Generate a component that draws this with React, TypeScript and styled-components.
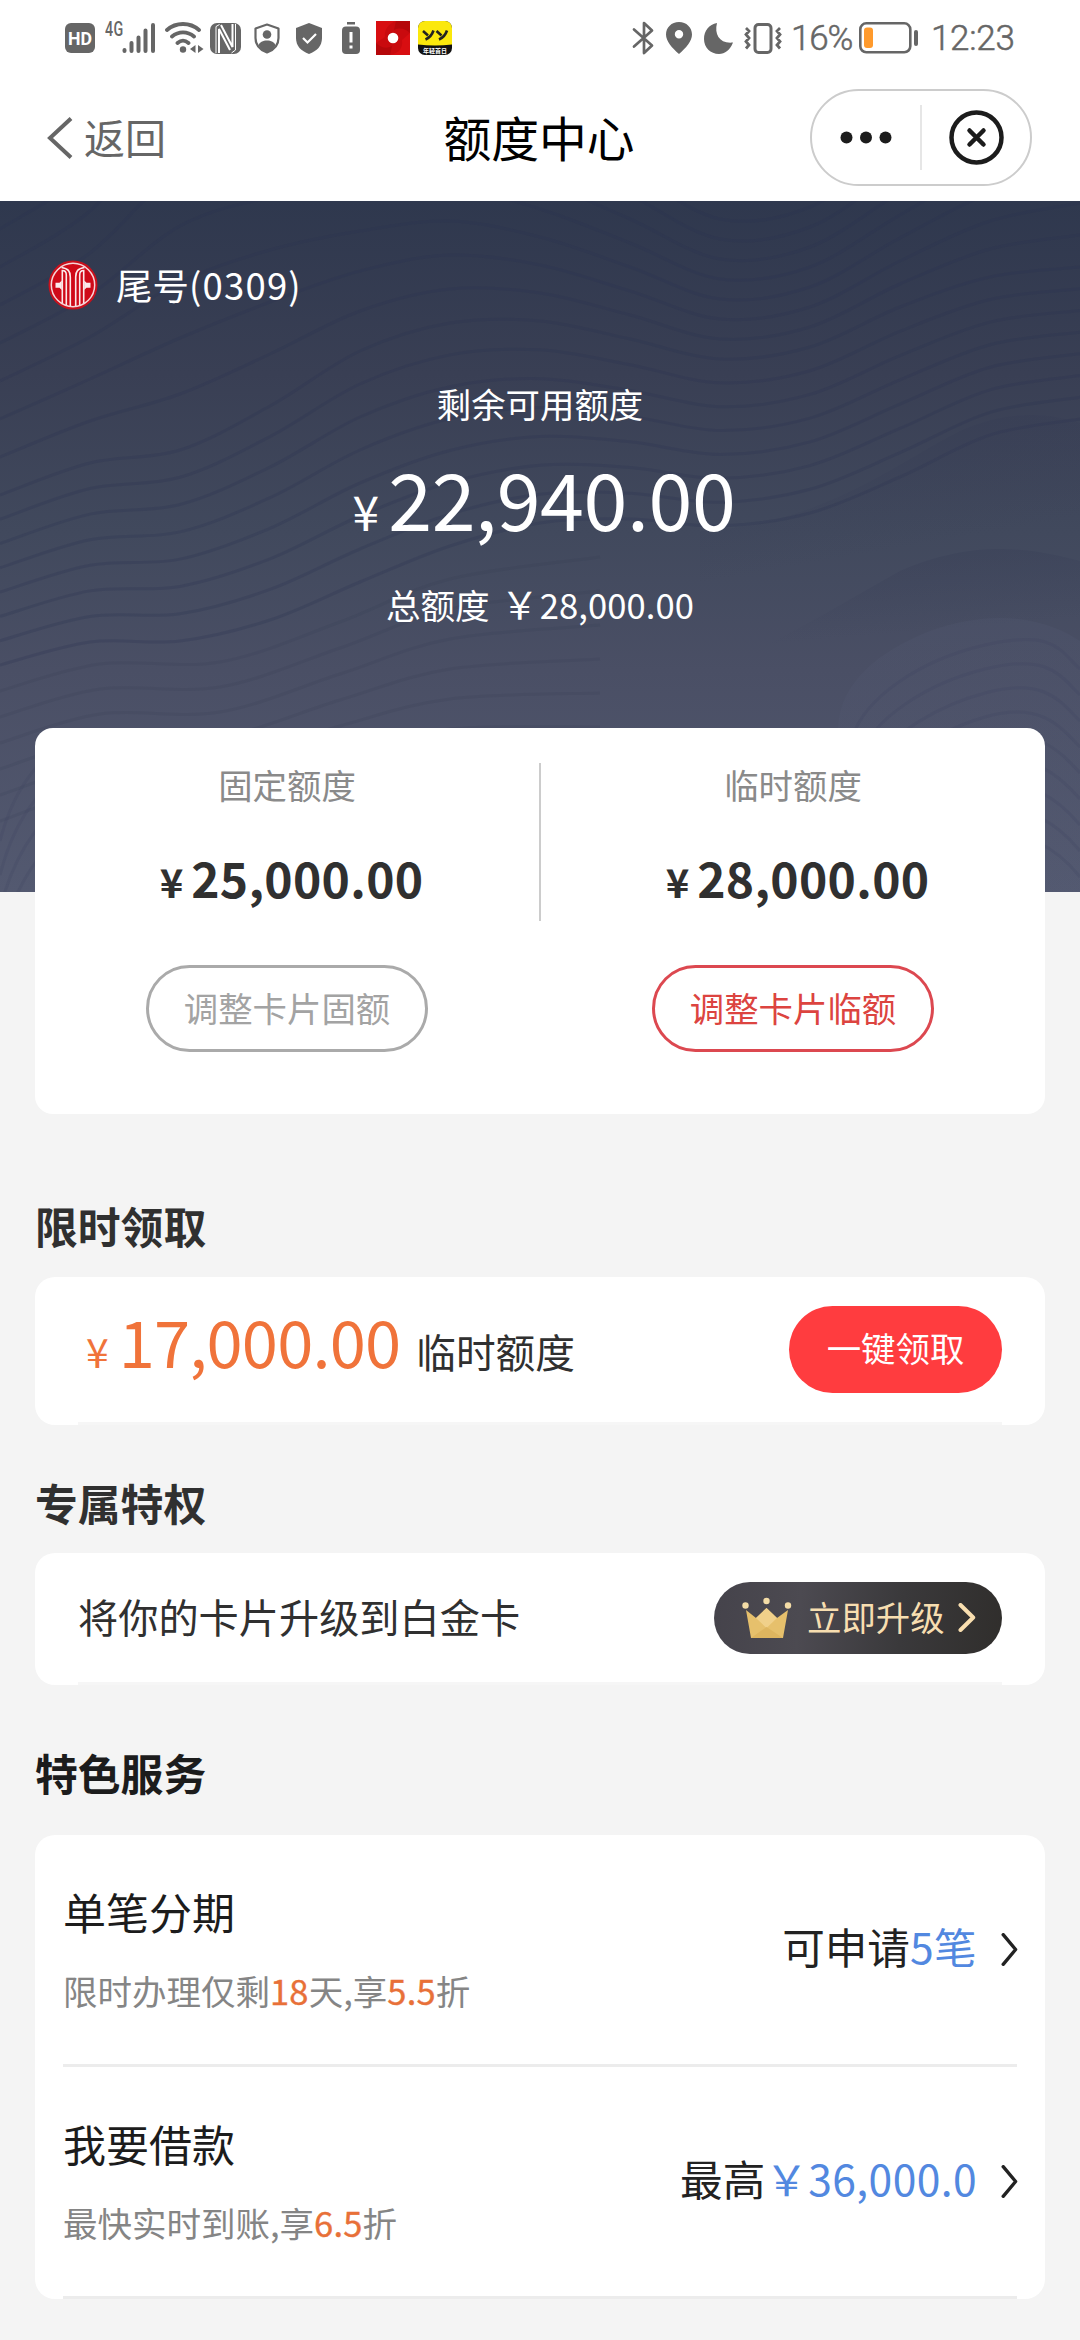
import React from "react";
import styled, { createGlobalStyle } from "styled-components";

const GlobalStyle = createGlobalStyle`
  * { box-sizing: border-box; }
  body {
    margin: 0;
    background: #f4f4f4;
    font-family: "Noto Sans CJK SC", "Noto Sans", sans-serif;
    color: #303030;
  }
  svg { display: block; flex: none; }
`;

const Page = styled.div`
  width: 1080px;
  height: 2340px;
  overflow: hidden;
  background: #f4f4f4;
  display: flex;
  flex-direction: column;
`;

/* ---------- status bar ---------- */

const StatusBar = styled.div`
  height: 76px;
  flex: none;
  padding: 0 67px 0 65px;
  background: #fff;
  display: flex;
  justify-content: space-between;
  color: #666;
`;

const StatusGroup = styled.div`
  display: flex;
  height: 76px;
  align-items: center;
`;

const Slot = styled.div<{ $gap?: number }>`
  margin-left: ${(p) => p.$gap ?? 0}px;
`;

const NetLabel = styled.div`
  font: 500 21px/20px Roboto, sans-serif;
  letter-spacing: 0.4px;
  width: 17px;
  margin: -18px 0 0 10px;
  transform: scaleX(0.68);
  transform-origin: left;
`;

const StatusText = styled.div<{ $gap: number; $track: number; $width: number }>`
  font: 300 35px/40px Roboto, sans-serif;
  -webkit-text-stroke: 0.5px #666;
  letter-spacing: ${(p) => p.$track}px;
  margin-left: ${(p) => p.$gap}px;
  width: ${(p) => p.$width}px;
  white-space: nowrap;
  padding-top: 1px;
`;

/* ---------- nav bar ---------- */

const NavBar = styled.header`
  height: 125px;
  flex: none;
  background: #fff;
  display: grid;
  grid-template-columns: 1fr auto 1fr;
  align-items: center;
  padding: 0 48px 0 46px;
`;

const Back = styled.div`
  display: flex;
  align-items: center;
  gap: 11px;
  margin-top: -1px;
  color: #666;
  font-size: 41px;
  line-height: 50px;
  span { margin-top: -4px; }
`;

const Title = styled.h1`
  margin: -4px 0 0;
  font-size: 47.8px;
  font-weight: 400;
  line-height: 60px;
  color: #000;
`;

const Capsule = styled.div`
  justify-self: end;
  width: 222px;
  height: 97px;
  margin-top: -3px;
  border: 2px solid #ccc;
  border-radius: 49px;
  display: flex;
  align-items: center;
`;

const CapsuleHalf = styled.div`
  flex: 1;
  display: flex;
  justify-content: center;
`;

const CapsuleRule = styled.div`
  width: 2px;
  height: 65px;
  background: #e6e6e6;
`;

/* ---------- hero ---------- */

const Hero = styled.section`
  position: relative;
  flex: none;
  height: 691px;
  background: linear-gradient(#2f384e 0%, #393f54 25%, #41495d 48%, #4a4f65 68%, #535970 100%);
  color: #fff;
`;

const Waves = styled.svg`
  position: absolute;
  inset: 0;
`;

const HeroContent = styled.div`
  position: relative;
  display: flex;
  flex-direction: column;
  align-items: center;
`;

const CardTail = styled.div`
  align-self: flex-start;
  display: flex;
  align-items: center;
  gap: 18px;
  margin: 57px 0 0 48px;
  height: 54px;
  font-size: 36.5px;
  line-height: 54px;
  b { font-weight: 400; letter-spacing: 1.2px; }
  span { margin-top: -1px; }
`;

const HeroLabel = styled.div`
  margin-top: 66px;
  font-size: 34.4px;
  line-height: 50px;
`;

const Balance = styled.div`
  display: flex;
  align-items: baseline;
  margin: 24px 0 0 8px;
  height: 90px;
  line-height: 90px;
`;

const Yen = styled.span<{ $size: number; $gap: number; $lead?: number; $weight?: number }>`
  font-size: ${(p) => p.$size}px;
  font-weight: ${(p) => p.$weight ?? 400};
  margin: 0 ${(p) => p.$gap}px 0 ${(p) => p.$lead ?? 0}px;
`;

const Digits = styled.span<{ $size: number; $track?: number; $weight?: number }>`
  font-size: ${(p) => p.$size}px;
  font-weight: ${(p) => p.$weight ?? 400};
  letter-spacing: ${(p) => p.$track ?? 0}px;
`;

const TotalLine = styled.div`
  display: flex;
  align-items: baseline;
  margin-top: 36px;
  font-size: 34.6px;
  line-height: 50px;
  height: 50px;
`;

/* ---------- cards ---------- */

const LimitCard = styled.section`
  position: relative;
  flex: none;
  margin: -164px 35px 0;
  height: 386px;
  border-radius: 18px;
  background: #fff;
  display: flex;
  align-items: flex-start;
`;

const LimitColumn = styled.div`
  flex: 1;
  display: flex;
  flex-direction: column;
  align-items: center;
`;

const LimitRule = styled.div`
  width: 2px;
  height: 158px;
  margin-top: 35px;
  background: #ccc;
`;

const LimitLabel = styled.div`
  margin-top: 31px;
  font-size: 34.4px;
  line-height: 50px;
  color: #8a8a8a;
`;

const LimitAmount = styled.div`
  display: flex;
  align-items: baseline;
  margin: 38px 0 0 9px;
  height: 60px;
  line-height: 60px;
  color: #303030;
`;

const OutlineButton = styled.button<{ $color: string; $border: string }>`
  margin-top: 58px;
  width: 282px;
  height: 87px;
  padding: 0 0 4px;
  border: 3px solid ${(p) => p.$border};
  border-radius: 44px;
  background: #fff;
  color: ${(p) => p.$color};
  font: 400 34.4px/50px "Noto Sans CJK SC", sans-serif;
`;

const SectionTitle = styled.h2<{ $top: number; $color?: string }>`
  margin: ${(p) => p.$top}px 0 0 35px;
  flex: none;
  height: 60px;
  font-size: 42.8px;
  font-weight: 700;
  line-height: 60px;
  color: ${(p) => p.$color ?? "#303030"};
`;

const Card = styled.section<{ $top: number; $height: number }>`
  flex: none;
  margin: ${(p) => p.$top}px 35px 0;
  height: ${(p) => p.$height}px;
  border-radius: 20px;
  background: #fff;
  display: flex;
  flex-direction: column;
`;

const OfferRow = styled.div<{ $left: number }>`
  flex: 1;
  margin: 0 43px;
  padding-left: ${(p) => p.$left}px;
  border-bottom: 3px solid #f6f6f6;
  display: flex;
  justify-content: space-between;
  align-items: center;
`;

const Offer = styled.div`
  display: flex;
  align-items: baseline;
  color: #f0733a;
  margin-top: -8px;
  line-height: 80px;
  em {
    font-style: normal;
    font-size: 39.7px;
    color: #303030;
    margin-left: 16px;
  }
`;

const ClaimButton = styled.button`
  width: 213px;
  height: 87px;
  border: 0;
  border-radius: 44px;
  padding: 0 0 5px;
  background: #ff3c3f;
  color: #fff;
  font: 400 34.4px/50px "Noto Sans CJK SC", sans-serif;
`;

const PerkText = styled.div`
  font-size: 40.2px;
  line-height: 60px;
  padding-bottom: 4px;
`;

const UpgradeButton = styled.button`
  width: 288px;
  height: 72px;
  border: 0;
  border-radius: 36px;
  padding: 0 26px 0 28px;
  background: linear-gradient(95deg, #45434b 0%, #4c4a51 30%, #3a393b 65%, #302e2c 100%);
  color: #f7deb0;
  font: 400 34.4px/50px "Noto Sans CJK SC", sans-serif;
  display: flex;
  align-items: center;
  span { margin: -3px auto 0 15px; }
`;

const ServiceRow = styled.div`
  height: 232px;
  margin: 0 28px;
  border-bottom: 3px solid #ececec;
  display: flex;
  justify-content: space-between;
`;

const ServiceText = styled.div`
  display: flex;
  flex-direction: column;
  padding-top: 46px;
`;

const ServiceName = styled.div`
  font-size: 43px;
  line-height: 60px;
  color: #1c1c1c;
`;

const ServiceNote = styled.div`
  margin-top: 24px;
  font-size: 34.5px;
  line-height: 50px;
  color: #858585;
  i {
    font-style: normal;
    color: #e87038;
    -webkit-text-stroke: 0.4px #e87038;
    letter-spacing: 0.2px;
  }
`;

const ServiceValue = styled.div`
  display: flex;
  align-items: center;
  gap: 24px;
  height: 60px;
  margin: 84px -1px 0 0;
  span { font-size: 42.6px; line-height: 60px; color: #222; margin-top: -6px; }
  b { font-weight: 400; color: #5288e0; letter-spacing: 0.4px; }
`;

/* ---------- drawings ---------- */

type Pt = [number, number];

const smooth = (pts: Pt[]) => {
  let d = `M${pts[0][0]} ${pts[0][1]}`;
  for (let i = 0; i < pts.length - 1; i++) {
    const a = pts[Math.max(0, i - 1)];
    const b = pts[i];
    const c = pts[i + 1];
    const e = pts[Math.min(pts.length - 1, i + 2)];
    d += ` C${b[0] + (c[0] - a[0]) / 6} ${b[1] + (c[1] - a[1]) / 6} ${c[0] - (e[0] - b[0]) / 6} ${c[1] - (e[1] - b[1]) / 6} ${c[0]} ${c[1]}`;
  }
  return d;
};

/* Contours run from `crest` down to `base`; above the crest they spread out and steepen. */
const crest = [294, 262, 249, 205, 150, 122, 120, 138, 158, 146, 106, 76, 66];
const base = [464, 441, 440, 419, 381, 345, 322, 318, 325, 312, 276, 234, 218];
const rise = [38, 42, 56, 52, 40, 34, 28, 24, 20, 20, 23, 28, 32];

const contours: string[] = [];
for (let i = 1; i <= 7; i++) {
  contours.push(smooth(crest.map((y, k): Pt => [k * 90, y - rise[k] * i])));
}
for (let i = 0; i <= 7; i++) {
  contours.push(smooth(crest.map((y, k): Pt => [k * 90, y + ((base[k] - y) * i) / 7])));
}

const HeroWaves = () => (
  <Waves width="1080" height="691" viewBox="0 0 1080 691">
    <defs>
      <linearGradient id="fold" x1="0" y1="0" x2="0.25" y2="1">
        <stop offset="0" stopColor="#353b54" stopOpacity="0.42" />
        <stop offset="0.6" stopColor="#353b54" stopOpacity="0" />
      </linearGradient>
      <linearGradient id="mound" x1="0" y1="0" x2="0" y2="1">
        <stop offset="0" stopColor="#5a617c" stopOpacity="0.16" />
        <stop offset="1" stopColor="#5a617c" stopOpacity="0.05" />
      </linearGradient>
    </defs>
    <g fill="none" stroke="#2c3350" strokeOpacity="0.26" strokeWidth="3">
      {contours.map((d, i) => (
        <path key={i} d={d} />
      ))}
      {[1, 2, 3, 4, 5, 6].map((n) => (
        <path
          key={n}
          strokeOpacity={0.13}
          d={smooth([
            [0, 464 + n * 26],
            [100, 438 + n * 25],
            [220, 436 + n * 25],
            [340, 395 + n * 26],
            [450, 348 + n * 30],
            [600, 322 + n * 34],
          ])}
        />
      ))}
    </g>
    <path
      fill="url(#fold)"
      d="M700 330C820 325 900 260 960 230C1010 208 1050 212 1080 222V360C1020 340 960 360 900 400C820 450 760 470 700 480Z"
    />
    <path
      fill="url(#fold)"
      d="M560 525C700 490 820 415 900 370C980 335 1040 350 1080 360V460C980 400 880 440 840 527Z"
    />
    <path fill="url(#mound)" d="M838 527C840 480 880 450 930 430C1000 405 1050 420 1080 440V691H838Z" />
    <g fill="none" stroke="#3b4160" strokeOpacity="0.2" strokeWidth="3">
      {[1, 2, 3, 4, 5, 6, 7, 8, 9].map((n) => (
        <path
          key={n}
          d={`M${840 + n * 13} ${527 + n * 8}C${850 + n * 14} ${480 + n * 20} ${910 + n * 5} ${436 + n * 24} ${985} ${420 + n * 24}S${1060} ${425 + n * 25} 1080 ${442 + n * 26}`}
        />
      ))}
      {[0, 1, 2, 3, 4].map((n) => (
        <path key={n} d={`M0 ${640 + n * 34}C10 ${600 + n * 34} 30 ${560 + n * 30} 80 ${530 + n * 30}`} />
      ))}
    </g>
  </Waves>
);

const BankLogo = () => (
  <svg width="50" height="50" viewBox="0 0 50 50">
    <circle cx="25" cy="25" r="24.5" fill="#c8101c" />
    <circle cx="25" cy="25" r="21.7" fill="#cf0a18" stroke="#f6d5d8" strokeWidth="1.5" />
    <g fill="none" stroke="#fbe9ea" strokeWidth="1.6">
      <path d="M13.500 7.500C20 8.500 22.300 11 22.300 17V46M36.500 7.500C30 8.500 27.700 11 27.700 17V46" />
      <path d="M14.300 43V10.500C17 10.500 18.300 12 18.300 15V45M35.700 43V10.500C33 10.500 31.700 12 31.700 15V45" />
    </g>
    <path d="M13.800 20.500V30L11.500 27.800H7.500V22.800H11.500ZM36.200 20.500V30L38.500 27.800H42.500V22.800H38.500Z" fill="#fbe9ea" />
  </svg>
);

const Crown = () => (
  <svg width="50" height="42" viewBox="0 0 50 42">
    <path d="M4 13L14 21L24.500 11L35 21L46 13L41 41H9Z" fill="#e6c06c" />
    <path d="M24.500 11L35 21L24.500 31L14 21Z" fill="#f0d08a" />
    <path d="M9 41L24.500 30L41 41Z" fill="#deb55f" />
    <circle cx="3.500" cy="8.500" r="3.200" fill="#f3dca6" />
    <circle cx="24.500" cy="4" r="3.200" fill="#f3dca6" />
    <circle cx="46" cy="8.500" r="3.200" fill="#f3dca6" />
  </svg>
);

const Chevron = ({ color, w, h, stroke }: { color: string; w: number; h: number; stroke: number }) => (
  <svg width={w} height={h} viewBox={`0 0 ${w} ${h}`} fill="none" stroke={color} strokeWidth={stroke}>
    <path d={`M${stroke / 2 + 0.5} ${stroke / 2}L${w - stroke * 0.7} ${h / 2}L${stroke / 2 + 0.5} ${h - stroke / 2}`} strokeLinecap="round" strokeLinejoin="round" />
  </svg>
);

const G = "#666";

const StatusLeft = () => (
  <StatusGroup>
    <Slot>
      <svg width="30" height="30" viewBox="0 0 30 30">
        <rect width="30" height="30" rx="6" fill={G} />
        <text x="15" y="22" textAnchor="middle" fontFamily="Roboto, sans-serif" fontWeight="700" fontSize="19" textLength="24" lengthAdjust="spacingAndGlyphs" fill="#fff">HD</text>
      </svg>
    </Slot>
    <NetLabel>4G</NetLabel>
    <Slot>
      <svg width="34" height="32" viewBox="0 0 34 32" stroke={G} strokeWidth="4" strokeLinecap="round">
        <path d="M2.500 29V28M9.500 29V21M16.500 29V15.500M23.500 29V8.500M31 29V3" />
      </svg>
    </Slot>
    <Slot $gap={9}>
      <svg width="39" height="32" viewBox="0 0 39 32" fill="none" stroke={G} strokeWidth="3.800" strokeLinecap="round">
        <path d="M2 8C11 0 25 0 34 8M7 14.500C13.500 9 22.500 9 29 14.500M12.500 21C16 18 20 18 23.500 21" />
        <circle cx="18" cy="27.500" r="3.200" fill={G} stroke="none" />
        <path d="M30.500 23V31L25 27ZM33 23V31L38.500 27Z" fill={G} stroke="none" />
      </svg>
    </Slot>
    <Slot $gap={6}>
      <svg width="31" height="31" viewBox="0 0 31 31">
        <rect width="31" height="31" rx="7" fill={G} />
        <path d="M9 30V6L20 27M11 2L22.500 24V1" fill="none" stroke="#fff" strokeWidth="2" />
        <path d="M6 30V3.500L9.500 1.500M25.500 1V27L21.500 30" fill="none" stroke="#fff" strokeWidth="1" />
      </svg>
    </Slot>
    <Slot $gap={13}>
      <svg width="26" height="31" viewBox="0 0 26 31">
        <path d="M13 1.500L24.500 5.500V15C24.500 22 20 27 13 29.500C6 27 1.500 22 1.500 15V5.500Z" fill="none" stroke={G} strokeWidth="2.200" strokeLinejoin="round" />
        <circle cx="13" cy="11.500" r="4.300" fill={G} />
        <path d="M4.500 22.500C6 15.800 20 15.800 21.500 22.500C19.500 26 16.500 28 13 29.200C9.500 28 6.500 26 4.500 22.500Z" fill={G} />
      </svg>
    </Slot>
    <Slot $gap={16}>
      <svg width="26" height="31" viewBox="0 0 26 31">
        <path d="M13 0L26 5V15C26 23 21 28 13 31C5 28 0 23 0 15V5Z" fill={G} />
        <path d="M7 15L11.500 19.500L20 11" fill="none" stroke="#fff" strokeWidth="2.200" />
      </svg>
    </Slot>
    <Slot $gap={20}>
      <svg width="18" height="32" viewBox="0 0 18 32">
        <rect x="5" width="8" height="2.500" fill={G} />
        <rect y="4.500" width="18" height="27.500" rx="4" fill={G} />
        <path d="M9 10V20.500M9 23.500V26.500" stroke="#fff" strokeWidth="3" />
      </svg>
    </Slot>
    <Slot $gap={16}>
      <svg width="34" height="34" viewBox="0 0 34 34">
        <rect width="34" height="34" fill="#c90a0e" />
        <path d="M0 0H20C12 3 8 9 9 16L0 22ZM34 34H14C24 32 27 26 26 19L34 12Z" fill="#d80e11" />
        <path d="M34 0V12C30 8 24 6 18 9L20 0ZM0 34V22C5 27 11 28 16 25L14 34Z" fill="#b5070a" />
        <circle cx="17" cy="17" r="5.300" fill="#fff" />
      </svg>
    </Slot>
    <Slot $gap={8}>
      <svg width="34" height="34" viewBox="0 0 34 34">
        <rect width="34" height="34" rx="7" fill="#111" />
        <path d="M0 23.500V7A7 7 0 0 1 7 0H27A7 7 0 0 1 34 7V23.500Q17 25.500 0 23.500Z" fill="#fbe80c" />
        <path d="M5 10L10 14.500M15.500 9.500C14 14 11 17 7.500 18.500M18.500 10L23.500 14.500M29 9.500C27.500 14 24.500 17 21 18.500" fill="none" stroke="#222" strokeWidth="2.600" />
        <text x="17" y="31.500" textAnchor="middle" fontSize="6" fontWeight="700" fill="#fff">年轻首日</text>
      </svg>
    </Slot>
  </StatusGroup>
);

const StatusRight = () => (
  <StatusGroup>
    <Slot>
      <svg width="22" height="34" viewBox="0 0 22 34" fill="none" stroke={G} strokeWidth="2.700" strokeLinejoin="round" strokeLinecap="round">
        <path d="M2 8.500L20 24.500L12 32V2L20 9.500L2 25.500" />
      </svg>
    </Slot>
    <Slot $gap={12}>
      <svg width="26" height="32" viewBox="0 0 26 32">
        <path fillRule="evenodd" d="M13 0C20.500 0 26 5.500 26 12.500C26 19 20 26 13 32C6 26 0 19 0 12.500C0 5.500 5.500 0 13 0ZM13 8A4.200 4.200 0 1 0 13 16.400A4.200 4.200 0 1 0 13 8Z" fill={G} />
      </svg>
    </Slot>
    <Slot $gap={12}>
      <svg width="29" height="31" viewBox="0 0 29 31">
        <path d="M13 0C10 12 16 21 29 19.500C26 27 21 31 15 31C6.500 31 0 24.500 0 16C0 8 5 1.500 13 0Z" fill={G} />
      </svg>
    </Slot>
    <Slot $gap={11}>
      <svg width="38" height="31" viewBox="0 0 38 31" fill="none" stroke={G}>
        <rect x="11" y="1.500" width="16" height="28" rx="3.500" strokeWidth="3" />
        <path d="M2 5L5 8L2 11.500L5 15L2 18.500L5 22L2 25.500M36 5L33 8L36 11.500L33 15L36 18.500L33 22L36 25.500" strokeWidth="2.800" />
      </svg>
    </Slot>
    <StatusText $gap={9} $track={-1.2} $width={62}>16%</StatusText>
    <Slot $gap={6}>
      <svg width="59" height="32" viewBox="0 0 59 32">
        <rect x="1.300" y="1.300" width="50" height="29" rx="6" fill="none" stroke={G} strokeWidth="2.600" />
        <rect x="5" y="5.500" width="9" height="20.500" rx="3" fill="#ff9a2c" />
        <rect x="55" y="8" width="4" height="16" rx="2" fill={G} />
      </svg>
    </Slot>
    <StatusText $gap={13} $track={-0.3} $width={82}>12:23</StatusText>
  </StatusGroup>
);

const Limit = (p: { label: string; amount: string; action: string; color: string; border: string }) => (
  <LimitColumn>
    <LimitLabel>{p.label}</LimitLabel>
    <LimitAmount>
      <Yen $size={40} $gap={8} $weight={700}>¥</Yen>
      <Digits $size={48} $track={0.3} $weight={700}>{p.amount}</Digits>
    </LimitAmount>
    <OutlineButton $color={p.color} $border={p.border}>{p.action}</OutlineButton>
  </LimitColumn>
);

export default function App() {
  return (
    <Page>
      <GlobalStyle />
      <StatusBar>
        <StatusLeft />
        <StatusRight />
      </StatusBar>
      <NavBar>
        <Back>
          <svg width="27" height="42" viewBox="0 0 27 42" fill="none" stroke="#666" strokeWidth="4">
            <path d="M25 1.500L4 21L25 40.500" />
          </svg>
          <span>返回</span>
        </Back>
        <Title>额度中心</Title>
        <Capsule>
          <CapsuleHalf>
            <svg width="52" height="13" viewBox="0 0 52 13" fill="#1c1c1c">
              <circle cx="6.500" cy="6.500" r="6" />
              <circle cx="26" cy="6.500" r="6" />
              <circle cx="45.500" cy="6.500" r="6" />
            </svg>
          </CapsuleHalf>
          <CapsuleRule />
          <CapsuleHalf>
            <svg width="55" height="55" viewBox="0 0 55 55" fill="none" stroke="#1c1c1c" strokeWidth="4.500" strokeLinecap="round">
              <circle cx="27.500" cy="27.500" r="25" />
              <path d="M20.500 20.500L34.500 34.500M34.500 20.500L20.500 34.500" />
            </svg>
          </CapsuleHalf>
        </Capsule>
      </NavBar>

      <Hero>
        <HeroWaves />
        <HeroContent>
          <CardTail>
            <BankLogo />
            <span>尾号<b>(0309)</b></span>
          </CardTail>
          <HeroLabel>剩余可用额度</HeroLabel>
          <Balance>
            <Yen $size={48} $gap={9}>¥</Yen>
            <Digits $size={79} $track={-0.4}>22,940.00</Digits>
          </Balance>
          <TotalLine>
            总额度
            <Yen $size={38} $gap={1} $lead={11}>￥</Yen>
            <Digits $size={34.6} $track={0.1}>28,000.00</Digits>
          </TotalLine>
        </HeroContent>
      </Hero>

      <LimitCard>
        <Limit label="固定额度" amount="25,000.00" action="调整卡片固额" color="#a3a3a3" border="#aaaaaa" />
        <LimitRule />
        <Limit label="临时额度" amount="28,000.00" action="调整卡片临额" color="#dc4440" border="#dc4850" />
      </LimitCard>

      <SectionTitle $top={81}>限时领取</SectionTitle>
      <Card $top={22} $height={148}>
        <OfferRow $left={8}>
          <Offer>
            <Yen $size={41} $gap={10}>¥</Yen>
            <Digits $size={65} $track={-0.8}>17,000.00</Digits>
            <em>临时额度</em>
          </Offer>
          <ClaimButton>一键领取</ClaimButton>
        </OfferRow>
      </Card>

      <SectionTitle $top={47}>专属特权</SectionTitle>
      <Card $top={21} $height={132}>
        <OfferRow $left={0}>
          <PerkText>将你的卡片升级到白金卡</PerkText>
          <UpgradeButton>
            <Crown />
            <span>立即升级</span>
            <Chevron color="#f9dfb0" w={18} h={29} stroke={4} />
          </UpgradeButton>
        </OfferRow>
      </Card>

      <SectionTitle $top={57} $color="#1c1c1c">特色服务</SectionTitle>
      <Card $top={33} $height={464}>
        <ServiceRow>
          <ServiceText>
            <ServiceName>单笔分期</ServiceName>
            <ServiceNote>限时办理仅剩<i>18</i>天,享<i>5.5</i>折</ServiceNote>
          </ServiceText>
          <ServiceValue>
            <span>可申请<b>5笔</b></span>
            <Chevron color="#222" w={17} h={33} stroke={3.4} />
          </ServiceValue>
        </ServiceRow>
        <ServiceRow>
          <ServiceText>
            <ServiceName>我要借款</ServiceName>
            <ServiceNote>最快实时到账,享<i>6.5</i>折</ServiceNote>
          </ServiceText>
          <ServiceValue>
            <span>最高<b>￥36,000.0</b></span>
            <Chevron color="#222" w={17} h={33} stroke={3.4} />
          </ServiceValue>
        </ServiceRow>
      </Card>
    </Page>
  );
}
